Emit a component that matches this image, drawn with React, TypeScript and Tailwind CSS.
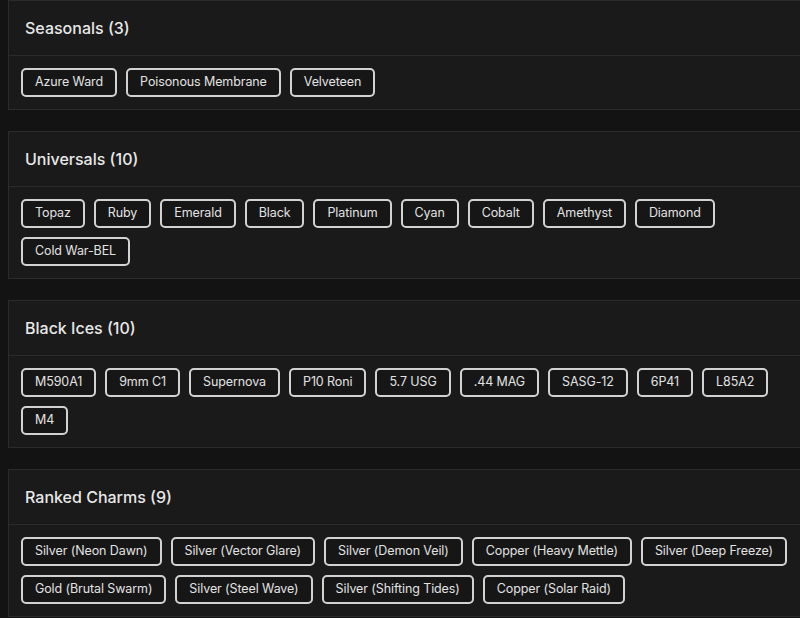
const groups: { title: string; items: string[] }[] = [
  { title: "Seasonals (3)", items: ["Azure Ward", "Poisonous Membrane", "Velveteen"] },
  {
    title: "Universals (10)",
    items: ["Topaz", "Ruby", "Emerald", "Black", "Platinum", "Cyan", "Cobalt", "Amethyst", "Diamond", "Cold War-BEL"],
  },
  {
    title: "Black Ices (10)",
    items: ["M590A1", "9mm C1", "Supernova", "P10 Roni", "5.7 USG", ".44 MAG", "SASG-12", "6P41", "L85A2", "M4"],
  },
  {
    title: "Ranked Charms (9)",
    items: [
      "Silver (Neon Dawn)",
      "Silver (Vector Glare)",
      "Silver (Demon Veil)",
      "Copper (Heavy Mettle)",
      "Silver (Deep Freeze)",
      "Gold (Brutal Swarm)",
      "Silver (Steel Wave)",
      "Silver (Shifting Tides)",
      "Copper (Solar Raid)",
    ],
  },
];

function Chip({ label }: { label: string }) {
  return (
    <span className="h-[29px] px-[12px] flex items-center rounded-[5px] border-2 border-[#d2d2d2] bg-[#161616] text-[12.5px] tracking-[-0.1px] text-[#e2e2e2] whitespace-nowrap">
      {label}
    </span>
  );
}

export default function App() {
  return (
    <div
      className="h-[618px] w-[800px] overflow-hidden bg-[#131313] pl-2"
      style={{ fontFamily: "Inter, 'Open Sans', sans-serif" }}
    >
      <div className="flex flex-col gap-[21px] w-[820px]">
        {groups.map((g) => (
          <section key={g.title} className="bg-[#1a1a1a] border border-[#2b2b2b]">
            <div className="h-[55px] flex items-center px-4 border-b border-[#2b2b2b]">
              <h2 className="text-[16px] font-medium text-[#e8e8e8]">{g.title}</h2>
            </div>
            <div className="flex flex-wrap gap-x-[9px] gap-y-[9px] w-[794px] px-[12px] pt-[12px] pb-[12px]">
              {g.items.map((it) => (
                <Chip key={it} label={it} />
              ))}
            </div>
          </section>
        ))}
      </div>
    </div>
  );
}
